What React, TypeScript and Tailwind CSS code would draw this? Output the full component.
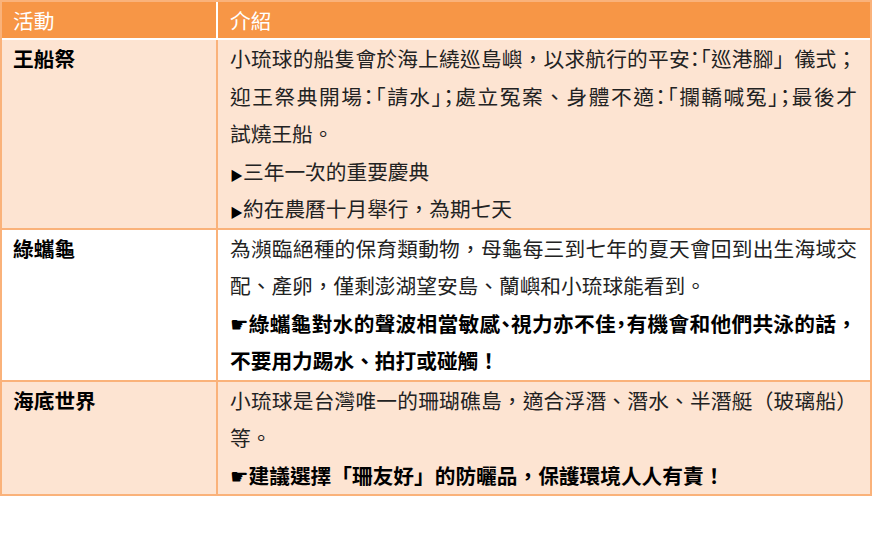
import React from "react";

// half-width punctuation, like the compressed pairs in the source
const H = ({ children }: { children: React.ReactNode }) => (
  <span className="[font-feature-settings:'halt']">{children}</span>
);

const Line = ({
  children,
  bold = false,
  full = false,
}: {
  children: React.ReactNode;
  bold?: boolean;
  full?: boolean;
}) => (
  <div
    className={`${full ? "w-[627px] [text-align-last:justify]" : "whitespace-nowrap"} ${
      bold ? "font-bold text-black" : ""
    }`}
  >
    {children}
  </div>
);

const Tri = () => <span className="inline-block align-baseline text-[13px] leading-none text-black">▶</span>;

const Row = ({
  title,
  tinted,
  last,
  children,
}: {
  title: string;
  tinted: boolean;
  last?: boolean;
  children: React.ReactNode;
}) => (
  <div
    className={`flex ${last ? "" : "border-b-2 border-[#fab27a]"} ${tinted ? "bg-[#fde4d2]" : "bg-white"}`}
  >
    <div className="w-[216px] shrink-0 border-r-2 border-[#fab27a] pl-[11px] font-bold text-black">
      {title}
    </div>
    <div className="flex-1 pl-[12px] text-[#222]">{children}</div>
  </div>
);

const App = () => {
  return (
    <div className="min-h-[535px] bg-white font-['Noto_Sans_CJK_TC','DejaVu_Sans',sans-serif] text-[20.7px] leading-[37.5px]">
      <div className="w-[872px] border-2 border-[#fab27a]">
        <div className="flex h-[38px] border-b-2 border-white bg-[#f79646] text-white leading-[36px]">
          <div className="w-[216px] shrink-0 border-r-2 border-white pl-[11px]">活動</div>
          <div className="flex-1 pl-[12px]">介紹</div>
        </div>

        <Row title="王船祭" tinted>
          <Line full>
            小琉球的船隻會於海上繞巡島嶼，以求航行的平安<H>：「</H>巡港腳」儀式；
          </Line>
          <Line full>
            迎王祭典開場<H>：「</H>請水<H>」；</H>處立冤案、身體不適<H>：「</H>攔轎喊冤<H>」；</H>最後才
          </Line>
          <Line>試燒王船。</Line>
          <Line>
            <Tri />三年一次的重要慶典
          </Line>
          <Line>
            <Tri />約在農曆十月舉行，為期七天
          </Line>
        </Row>

        <Row title="綠蠵龜" tinted={false}>
          <Line full>為瀕臨絕種的保育類動物，母龜每三到七年的夏天會回到出生海域交</Line>
          <Line>配、產卵，僅剩澎湖望安島、蘭嶼和小琉球能看到。</Line>
          <Line bold full>
            ☛綠蠵龜對水的聲波相當敏感<H>、</H>視力亦不佳<H>，</H>有機會和他們共泳的話，
          </Line>
          <Line bold>不要用力踢水、拍打或碰觸！</Line>
        </Row>

        <Row title="海底世界" tinted last>
          <Line full>小琉球是台灣唯一的珊瑚礁島，適合浮潛、潛水、半潛艇（玻璃船）</Line>
          <Line>等。</Line>
          <Line bold>☛建議選擇「珊友好」的防曬品，保護環境人人有責！</Line>
        </Row>
      </div>
    </div>
  );
};

export default App;
